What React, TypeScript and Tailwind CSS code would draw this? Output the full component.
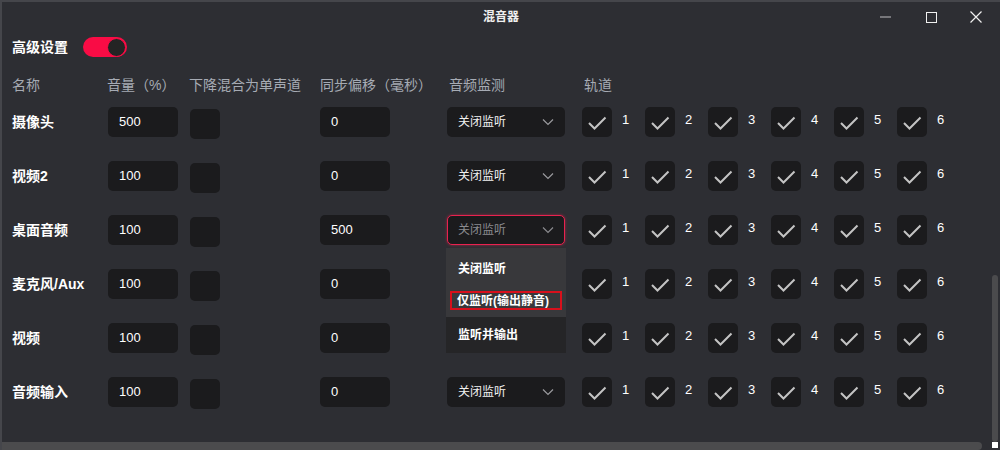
import React from "react";

const rows = [
  { name: "摄像头", vol: "500", sync: "0", mode: "normal" },
  { name: "视频2", vol: "100", sync: "0", mode: "normal" },
  { name: "桌面音频", vol: "100", sync: "500", mode: "open" },
  { name: "麦克风/Aux", vol: "100", sync: "0", mode: "hidden" },
  { name: "视频", vol: "100", sync: "0", mode: "hidden" },
  { name: "音频输入", vol: "100", sync: "0", mode: "normal" },
];

const Chevron = ({ color }: { color: string }) => (
  <svg width="12" height="8" viewBox="0 0 12 8" fill="none">
    <polyline points="1,1.5 6,6.5 11,1.5" stroke={color} strokeWidth="1.2" />
  </svg>
);

const Check = () => (
  <div className="w-[30px] h-[30px] rounded-[5px] bg-[#1b1b1d] flex items-center justify-center">
    <svg width="30" height="30" viewBox="0 0 30 30" fill="none">
      <polyline points="7,16 12.5,21.5 23.5,10.5" stroke="#c4c4c4" strokeWidth="2" />
    </svg>
  </div>
);

export default function App() {
  return (
    <div
      className="relative w-[1000px] h-[450px] overflow-hidden bg-[#2d2e33] border-t-2 border-l-2 border-[#45464b] text-white"
      style={{ fontFamily: '"Liberation Sans", "Noto Sans CJK SC", sans-serif' }}
    >
      {/* title bar */}
      <div className="relative h-[30px] flex items-center justify-center">
        <span className="text-[12px] font-bold text-[#f0f0f0]">混音器</span>
        <div className="absolute right-0 top-0 h-[30px] flex items-center">
          <div className="w-[46px] flex justify-center">
            <div className="w-[11px] h-[2px] bg-[#76767a]" />
          </div>
          <div className="w-[46px] flex justify-center">
            <div className="w-[11px] h-[11px] border border-[#f0f0f0]" />
          </div>
          <div className="w-[46px] flex justify-center pr-[2px]">
            <svg width="12" height="12" viewBox="0 0 12 12">
              <path d="M0.5 0.5 L11.5 11.5 M11.5 0.5 L0.5 11.5" stroke="#f0f0f0" strokeWidth="1.2" />
            </svg>
          </div>
        </div>
      </div>

      {/* advanced settings */}
      <div className="h-[30px] pl-[10px] flex items-center gap-[15px]">
        <span className="text-[14px] font-bold">高级设置</span>
        <div className="w-[44px] h-[20px] rounded-full bg-[#f90c45] flex items-center justify-end pr-[1px]">
          <div className="w-[19px] h-[19px] rounded-full bg-[#242424] border-[1.5px] border-[#f90c45]" />
        </div>
      </div>

      {/* header */}
      <div className="mt-[14px] h-[19px] pl-[10px] grid grid-cols-[96px_82px_130px_127px_135px_1fr] items-center text-[14px] text-[#a6abb4] leading-[19px]">
        <span>名称</span>
        <span className="-ml-[1px]">音量（%）</span>
        <span className="-ml-[1px]">下降混合为单声道</span>
        <span>同步偏移（毫秒）</span>
        <span className="pl-[2px]">音频监测</span>
        <span className="pl-[2px]">轨道</span>
      </div>

      {/* rows */}
      {rows.map((r, i) => (
        <div
          key={i}
          className="h-[54px] pl-[10px] grid grid-cols-[96px_82px_130px_127px_135px_1fr] items-center"
        >
          <span className="text-[14px] font-bold">{r.name}</span>
          <div className="w-[70px] h-[30px] rounded-[5px] bg-[#1b1b1d] flex items-center pl-[11px] text-[13px]">
            {r.vol}
          </div>
          <div className="w-[30px] h-[30px] mt-[4px] rounded-[5px] bg-[#1b1b1d]" />
          <div className="w-[70px] h-[30px] rounded-[5px] bg-[#1b1b1d] flex items-center pl-[11px] text-[13px]">
            {r.sync}
          </div>
          <div className="relative">
            {r.mode !== "hidden" &&
              (r.mode === "open" ? (
                <div className="w-[118px] h-[30px] rounded-[5px] bg-[#1b1b1d] border border-[#e8224f] shadow-[0_0_3px_rgba(232,34,79,0.6)] flex items-center justify-between pl-[10px] pr-[10px] text-[12px] text-[#8a8a8e]">
                  <span>关闭监听</span>
                  <Chevron color="#8a8a8e" />
                </div>
              ) : (
                <div className="w-[118px] h-[30px] rounded-[5px] bg-[#1b1b1d] flex items-center justify-between pl-[11px] pr-[11px] text-[12px] text-[#f2f2f2]">
                  <span>关闭监听</span>
                  <Chevron color="#9a9a9e" />
                </div>
              ))}
            {r.mode === "open" && (
              <div className="absolute left-[-1px] top-[33px] w-[120px] z-10 bg-[#252527] text-[12px] font-bold text-white">
                <div className="bg-[#38383b]">
                  <div className="h-[36px] flex items-center pl-[12px] pt-[6px]">关闭监听</div>
                  <div className="h-[33px] flex items-center px-[4px]">
                    <div className="w-[113px] h-[19px] border-2 border-[#d8101c] flex items-center pl-[5px]">
                      仅监听(输出静音)
                    </div>
                  </div>
                </div>
                <div className="h-[36px] flex items-center pl-[12px]">监听并输出</div>
              </div>
            )}
          </div>
          <div className="flex items-center">
            {[1, 2, 3, 4, 5, 6].map((n) => (
              <div key={n} className="w-[63px] flex items-center">
                <Check />
                <span className="ml-[10px] text-[13px] -mt-[4px]">{n}</span>
              </div>
            ))}
          </div>
        </div>
      ))}

      {/* scrollbars */}
      <div className="absolute left-0 bottom-0 w-[980px] h-[8px] rounded-r-[4px] bg-[#4b4b4d]" />
      <div className="absolute right-[2px] top-[273px] w-[6px] h-[167px] rounded-[3px] bg-[#4b4b4d]" />
      <div className="absolute right-[2px] bottom-[2px] w-[6px] h-[6px] bg-white" />
    </div>
  );
}
